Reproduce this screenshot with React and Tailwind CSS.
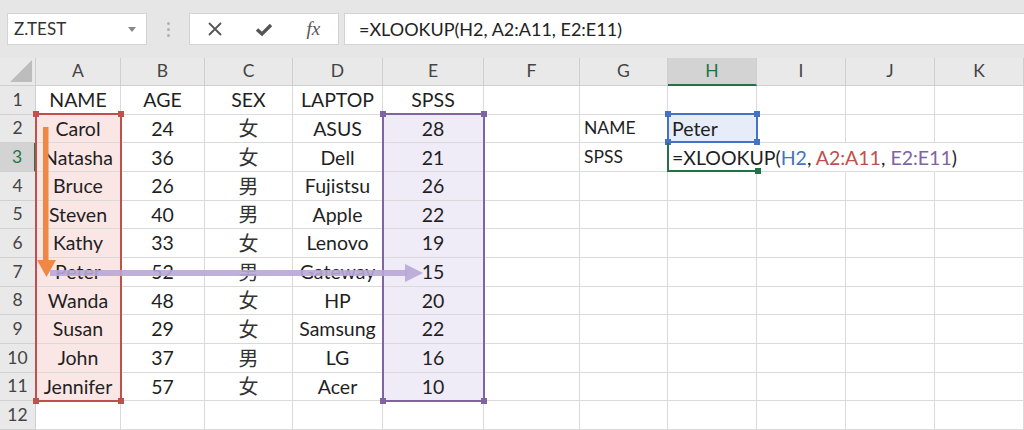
import React from "react";

const COLS = [
  { id: "A", w: "w-[85px]" },
  { id: "B", w: "w-[84px]" },
  { id: "C", w: "w-[88px]" },
  { id: "D", w: "w-[90px]" },
  { id: "E", w: "w-[101px]" },
  { id: "F", w: "w-[96px]" },
  { id: "G", w: "w-[88px]" },
  { id: "H", w: "w-[89px]" },
  { id: "I", w: "w-[89px]" },
  { id: "J", w: "w-[89px]" },
  { id: "K", w: "w-[89px]" },
];

const DATA = [
  ["NAME", "AGE", "SEX", "LAPTOP", "SPSS"],
  ["Carol", "24", "女", "ASUS", "28"],
  ["Natasha", "36", "女", "Dell", "21"],
  ["Bruce", "26", "男", "Fujistsu", "26"],
  ["Steven", "40", "男", "Apple", "22"],
  ["Kathy", "33", "女", "Lenovo", "19"],
  ["Peter", "52", "男", "Gateway", "15"],
  ["Wanda", "48", "女", "HP", "20"],
  ["Susan", "29", "女", "Samsung", "22"],
  ["John", "37", "男", "LG", "16"],
  ["Jennifer", "57", "女", "Acer", "10"],
];

const ROWS = [1, 2, 3, 4, 5, 6, 7, 8, 9, 10, 11, 12];

function Formula() {
  return (
    <span className="relative z-10 text-[19.5px]">
      =XLOOKUP(<span className="text-[#4472c4]">H2</span>,{" "}
      <span className="text-[#c0504d]">A2:A11</span>,{" "}
      <span className="text-[#8064a2]">E2:E11</span>)
    </span>
  );
}

function cellContent(r, ci) {
  if (r <= 11 && ci < 5) return DATA[r - 1][ci];
  if (r === 2 && ci === 6) return <span className="text-[17.5px]">NAME</span>;
  if (r === 3 && ci === 6) return <span className="text-[17.5px]">SPSS</span>;
  if (r === 2 && ci === 7) return "Peter";
  if (r === 3 && ci === 7) return <Formula />;
  return null;
}

function cellBg(r, ci) {
  if (r >= 2 && r <= 11 && ci === 0) return "bg-[#fbe6e6]";
  if (r >= 2 && r <= 11 && ci === 4) return "bg-[#efebf7]";
  if (r === 2 && ci === 7) return "bg-[#e6edf8]";
  return "bg-white";
}

// text of H3 spills over I3 and J3, so those gridlines are hidden
function rightBorder(r, ci) {
  if (r === 3 && ci >= 7 && ci <= 9) return "border-r-transparent";
  return "";
}

function Handle({ pos, color }) {
  return <div className={`absolute h-[6px] w-[6px] ${pos} ${color}`} />;
}

function RangeBox({ box, border, fill }) {
  return (
    <div className={`pointer-events-none absolute z-20 ${box} border-2 ${border}`}>
      <Handle pos="-left-[4px] -top-[4px]" color={fill} />
      <Handle pos="-right-[4px] -top-[4px]" color={fill} />
      <Handle pos="-left-[4px] -bottom-[4px]" color={fill} />
      <Handle pos="-right-[4px] -bottom-[4px]" color={fill} />
    </div>
  );
}

export default function App() {
  return (
    <div
      className="relative h-[430px] w-[1024px] overflow-hidden bg-white text-[#1f1f1f]"
      style={{ fontFamily: "Lato, 'Noto Sans', sans-serif" }}
    >
      {/* formula bar */}
      <div className="flex h-[58px] items-start bg-[#e6e6e6] pt-[13px]">
        <div className="ml-[7px] flex h-[32px] w-[140px] items-center justify-between border border-[#d4d4d4] bg-white pl-[6px] pr-[10px] text-[17px] text-[#333]">
          <span>Z.TEST</span>
          <svg width="8" height="5" viewBox="0 0 8 5">
            <path d="M0 0h8L4 5z" fill="#888" />
          </svg>
        </div>
        <div className="flex h-[32px] w-[42px] flex-col items-center justify-center gap-[3px]">
          <span className="h-[3px] w-[3px] rounded-full bg-[#b0b0b0]" />
          <span className="h-[3px] w-[3px] rounded-full bg-[#b0b0b0]" />
          <span className="h-[3px] w-[3px] rounded-full bg-[#b0b0b0]" />
        </div>
        <div className="flex h-[32px] w-[150px] items-center border border-[#d4d4d4] bg-white">
          <div className="flex w-[50px] justify-center">
            <svg width="16" height="16" viewBox="0 0 16 16">
              <path d="M2 2L14 14M14 2L2 14" stroke="#555" strokeWidth="1.8" />
            </svg>
          </div>
          <div className="flex w-[50px] justify-center">
            <svg width="20" height="16" viewBox="0 0 20 16">
              <path d="M3 8.5L8 13L17 4" stroke="#555" strokeWidth="3.4" fill="none" />
            </svg>
          </div>
          <div
            className="flex w-[50px] justify-center text-[19px] italic text-[#555]"
            style={{ fontFamily: "'Liberation Serif', serif" }}
          >
            fx
          </div>
        </div>
        <div className="ml-[5px] flex h-[32px] flex-1 items-center border border-r-0 border-[#d4d4d4] bg-white pl-[14px] text-[18px] text-[#222]">
          =XLOOKUP(H2, A2:A11, E2:E11)
        </div>
      </div>

      {/* column headers */}
      <div className="flex h-[28px] bg-[#e9e9e9] text-[17.5px] text-[#444]">
        <div className="relative w-[36px] border-r border-b border-[#cfcfcf]">
          <svg className="absolute right-[3px] bottom-[3px]" width="22" height="22" viewBox="0 0 22 22">
            <path d="M22 0V22H0z" fill="#bdbdbd" />
          </svg>
        </div>
        {COLS.map((c) => (
          <div
            key={c.id}
            className={`${c.w} flex items-center justify-center border-r border-[#cfcfcf] ${
              c.id === "H"
                ? "bg-[#d3d3d3] text-[#217346] border-b-2 border-b-[#217346]"
                : "border-b border-b-[#cfcfcf]"
            }`}
          >
            {c.id}
          </div>
        ))}
      </div>

      {/* rows */}
      <div className="relative">
        {ROWS.map((r) => (
          <div key={r} className="flex h-[28.67px] text-[19.5px]">
            <div
              className={`flex w-[36px] items-center justify-center text-[17.5px] border-b border-[#d0d0d0] ${
                r === 3
                  ? "bg-[#d3d3d3] text-[#217346] border-r-2 border-r-[#217346]"
                  : "bg-[#e9e9e9] text-[#444] border-r border-r-[#cfcfcf]"
              }`}
            >
              {r}
            </div>
            {COLS.map((c, ci) => (
              <div
                key={c.id}
                className={`${c.w} ${cellBg(r, ci)} flex items-center whitespace-nowrap border-r border-b border-[#dadada] ${rightBorder(r, ci)} ${
                  ci < 5 ? "justify-center" : "justify-start pl-[4px]"
                }`}
                style={
                  ci === 2 && r > 1
                    ? { fontFamily: "'Noto Sans CJK SC', sans-serif", fontSize: 20, color: "#333" }
                    : undefined
                }
              >
                {cellContent(r, ci)}
              </div>
            ))}
          </div>
        ))}

        {/* selection ranges */}
        <RangeBox box="left-[35px] top-[27px] w-[87px] h-[289px]" border="border-[#c0504d]" fill="bg-[#c0504d]" />
        <RangeBox box="left-[382px] top-[27px] w-[103px] h-[289px]" border="border-[#8064a2]" fill="bg-[#8064a2]" />
        <RangeBox box="left-[667px] top-[27px] w-[91px] h-[30px]" border="border-[#4472c4]" fill="bg-[#4472c4]" />
        <div className="pointer-events-none absolute z-20 left-[667px] top-[57px] h-[29px] w-[91px] border-l-2 border-b-2 border-[#217346]">
          <div className="absolute -right-[3px] -bottom-[4px] h-[6px] w-[6px] bg-[#217346]" />
        </div>
      </div>

      {/* arrows */}
      <svg className="pointer-events-none absolute left-0 top-0 z-30" width="1024" height="430">
        <rect x="43" y="127" width="5.5" height="136" fill="#ee8844" />
        <path d="M37 260H56L46.5 277z" fill="#ee8844" />
        <rect x="50" y="270" width="357" height="6" fill="#b8a7d6" opacity="0.9" />
        <path d="M405 264V282L423 273z" fill="#b8a7d6" opacity="0.9" />
      </svg>
    </div>
  );
}
